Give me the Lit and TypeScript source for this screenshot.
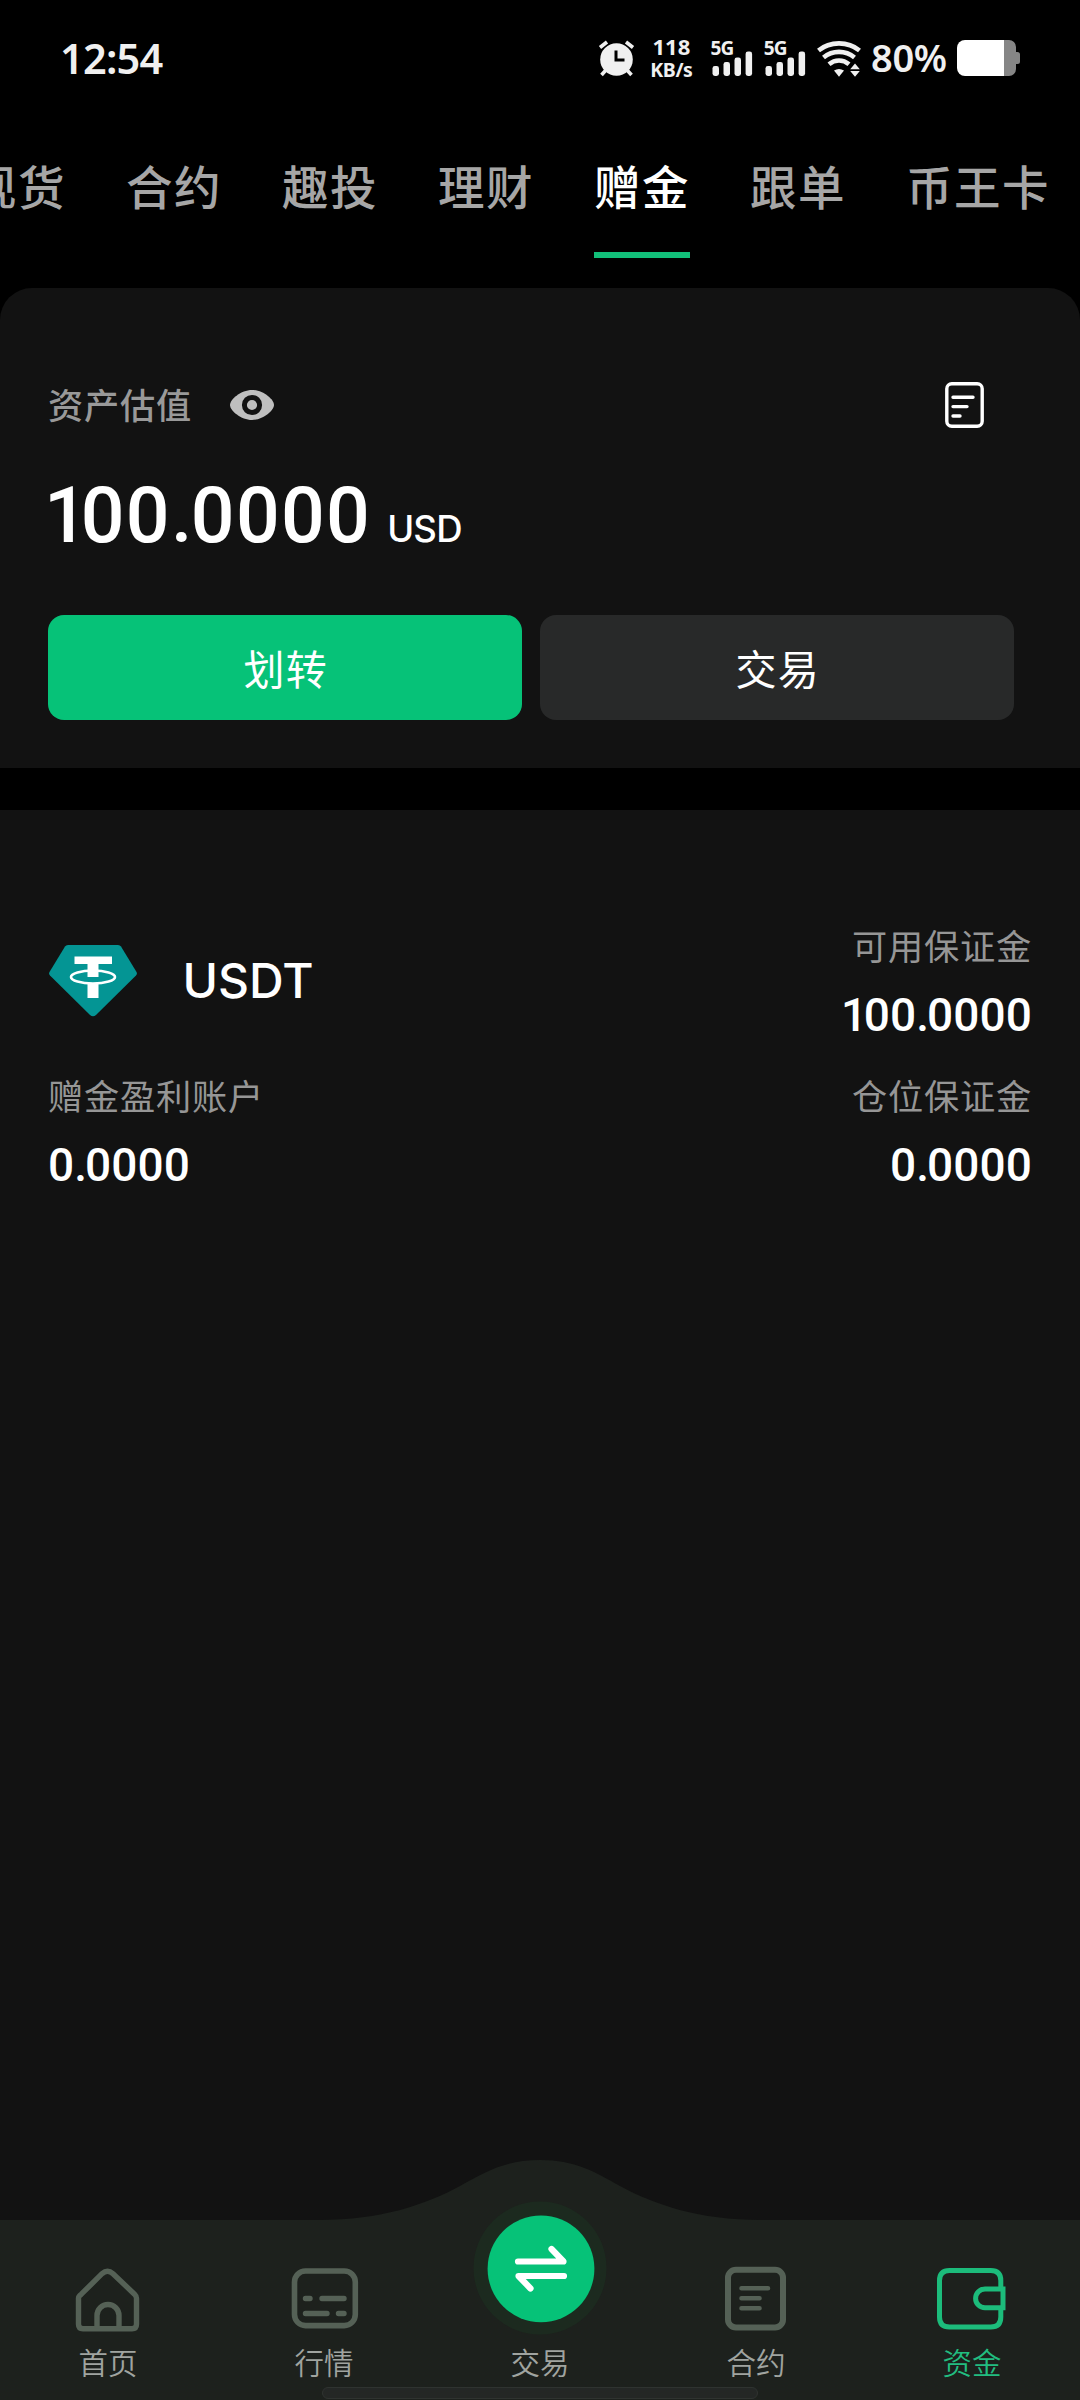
import { LitElement, html, css, svg } from "lit";
import { customElement, property } from "lit/decorators.js";
import { classMap } from "lit/directives/class-map.js";

const CJK = css`"Noto Sans CJK SC", "Noto Sans", sans-serif`;
const LATIN = css`Inter, "Noto Sans CJK SC", sans-serif`;
const DIGITS = css`Roboto, Inter, sans-serif`;

/** Tightens the leading one and the decimal point, as proportional figures do. */
const figures = (value: string) =>
  [...value].map((c) =>
    c === "1" ? html`<span class="one">1</span>` : c === "." ? html`<span class="dot">.</span>` : c
  );

@customElement("status-bar")
class StatusBar extends LitElement {
  static styles = css`
    :host { display: block; }
    .bar {
      height: 116px;
      box-sizing: border-box;
      padding: 0 60px 0 60px;
      display: flex;
      align-items: center;
      color: #f0f0f0;
      font-family: "Noto Sans", sans-serif;
    }
    .time { font-size: 41.5px; font-weight: 600; letter-spacing: -0.8px; line-height: 60px; flex: 1; margin-top: -1px; }
    .alarm { display: block; margin-right: 14.5px; }
    .speed {
      width: 44px;
      margin-right: 18.5px;
      display: flex;
      flex-direction: column;
      align-items: center;
      font-weight: 700;
      font-size: 22px;
      line-height: 23px;
    }
    .unit { font-size: 19.5px; letter-spacing: -0.4px; }
    .signal { width: 43px; height: 36px; margin-right: 10.3px; display: flex; position: relative; }
    .gen { position: absolute; left: -1.5px; top: -3px; font-size: 19px; line-height: 22px; font-weight: 700; letter-spacing: -0.8px; }
    .bars { display: block; }
    .wifi { display: block; margin-left: -1.5px; margin-right: 10px; }
    .pct { font-size: 38px; line-height: 60px; font-weight: 600; letter-spacing: -0.3px; width: 77px; margin-right: 9px; margin-top: -2px; white-space: nowrap; }
    .battery { display: block; }
  `;

  private signal() {
    return html`<div class="signal">
      <span class="gen">5G</span>
      <svg class="bars" width="43" height="36" viewBox="0 0 43 36" fill="#f0f0f0">
        <rect x="0.5" y="26" width="6.5" height="10" rx="2.4" />
        <rect x="11.5" y="22" width="6.5" height="14" rx="2.4" />
        <rect x="22.5" y="17.500" width="6.5" height="18.5" rx="2.4" />
        <rect x="33.6" y="11.500" width="6.5" height="24.5" rx="2.4" />
      </svg>
    </div>`;
  }

  render() {
    return html`<div class="bar">
      <span class="time">12:54</span>
      <svg class="alarm" width="37" height="37" viewBox="0 0 37 37">
        <path d="M2 7.5 9 2M35 7.5 28 2" stroke="#f0f0f0" stroke-width="3.6" fill="none" />
        <path d="M8 30l-4.500 5M29 30l4.500 5" stroke="#f0f0f0" stroke-width="3.6" />
        <circle cx="18.500" cy="19.500" r="16.300" fill="#f0f0f0" />
        <path d="M18 10.500V20H26.500" stroke="#000" stroke-width="3" fill="none" />
      </svg>
      <div class="speed"><span>118</span><span class="unit">KB/s</span></div>
      ${this.signal()}${this.signal()}
      <svg class="wifi" width="44" height="37" viewBox="0 0 44 37">
        <g fill="none" stroke="#f0f0f0" stroke-width="4.600">
          <path d="M1.500 10.500C13 1 31 1 42.500 10.500" />
          <path d="M6.500 17.500C15.500 10 28.500 10 37.500 17.500" />
          <path d="M12 24.200C18 19.200 26 19.200 32 24.200" />
        </g>
        <path d="M17 30.500Q22 27.500 27 30.500L22 36.800Z" fill="#f0f0f0" />
        <path d="M38 23.500 42.800 29.200H33.200ZM38 36.800 33.200 31H42.800Z" fill="#f0f0f0" />
      </svg>
      <span class="pct">80%</span>
      <svg class="battery" width="63" height="36" viewBox="0 0 63 36">
        <path d="M47 0h5a7 7 0 0 1 7 7v5h1.500a2.500 2.500 0 0 1 2.500 2.500v7a2.500 2.500 0 0 1-2.500 2.500H59v5a7 7 0 0 1-7 7h-5z" fill="#868686" />
        <path d="M8 0H47V36H8a8 8 0 0 1-8-8V8a8 8 0 0 1 8-8z" fill="#fff" />
      </svg>
    </div>`;
  }
}

@customElement("account-tabs")
class AccountTabs extends LitElement {
  @property({ type: Array }) items: string[] = [];
  @property() active = "";

  static styles = css`
    :host { display: block; overflow: hidden; }
    .tabs { display: flex; gap: 60px; margin-left: -30px; height: 142px; }
    .tab {
      flex: none;
      box-sizing: border-box;
      height: 142px;
      padding-top: 34px;
      border-bottom: 6px solid transparent;
      font: 500 46.5px/70px ${CJK};
      letter-spacing: 1.5px;
      color: #a6a6a6;
      white-space: nowrap;
    }
    .on { color: #fff; border-bottom-color: #12bf79; }
  `;

  render() {
    return html`<nav class="tabs">
      ${this.items.map(
        (t) => html`<span class=${classMap({ tab: true, on: t === this.active })}>${t}</span>`
      )}
    </nav>`;
  }
}

@customElement("balance-panel")
class BalancePanel extends LitElement {
  static styles = css`
    :host { display: block; }
    .panel {
      box-sizing: border-box;
      height: 480px;
      background: #121212;
      border-radius: 32px 32px 0 0;
      padding: 90px 66px 48px 48px;
      display: flex;
      flex-direction: column;
    }
    .head { display: flex; align-items: center; height: 54px; }
    .label { font: 500 35.2px/54px ${CJK}; letter-spacing: 0.8px; color: #999; margin-top: -3px; }
    .eye { display: block; margin-left: 38px; }
    .doc { display: block; margin-left: auto; margin-right: 30px; }
    .amount { display: flex; align-items: baseline; margin-top: 34px; height: 100px; color: #fff; white-space: nowrap; }
    .num { font: 500 77px/100px ${DIGITS}; letter-spacing: 1.3px; margin-left: -4px; }
    .one { letter-spacing: -7px; }
    .dot { letter-spacing: -1.5px; }
    .cur { font: 450 36.500px/100px ${LATIN}; letter-spacing: -0.8px; margin-left: 16px; }
    .actions { display: flex; gap: 18px; margin-top: auto; }
    .btn {
      flex: 1;
      height: 105px;
      border-radius: 16px;
      background: #282929;
      color: #fff;
      text-align: center;
      font: 400 41px/104px ${CJK};
      letter-spacing: 1.2px;
      text-indent: 1.6px;
    }
    .primary { background: #06c278; }
  `;

  render() {
    return html`<section class="panel">
      <div class="head">
        <span class="label">资产估值</span>
        <svg class="eye" width="44" height="30" viewBox="0 0 44 30">
          <path d="M22 0C33 0 44 9.500 44 15S33 30 22 30 0 20.500 0 15 11 0 22 0Z" fill="#bfbfbf" />
          <circle cx="22" cy="15" r="7.600" fill="#bfbfbf" stroke="#121212" stroke-width="5" />
        </svg>
        <svg class="doc" width="39" height="46" viewBox="0 0 39 46" fill="none" stroke="#fff">
          <rect x="1.800" y="1.800" width="35.400" height="42.400" rx="5" stroke-width="3.400" />
          <path d="M8 15.200H28M8 24.600H22M8 34H15" stroke-width="3.400" stroke-linecap="round" />
        </svg>
      </div>
      <div class="amount"><span class="num">${figures("100.0000")}</span><span class="cur">USD</span></div>
      <div class="actions">
        <div class="btn primary">划转</div>
        <div class="btn">交易</div>
      </div>
    </section>`;
  }
}

@customElement("asset-card")
class AssetCard extends LitElement {
  static styles = css`
    :host { display: block; }
    .card {
      display: grid;
      grid-template-columns: 1fr auto;
      padding: 108px 48px 0;
    }
    .coin { display: flex; align-items: center; height: 150px; }
    .gem { display: block; margin: -25px 0 0 0; }
    .name { font: 500 48px/60px ${LATIN}; letter-spacing: 0; color: #fff; margin: -25px 0 0 44.5px; }
    .cell { display: flex; flex-direction: column; height: 150px; }
    .end { align-items: flex-end; }
    .label { font: 400 35.2px/54px ${CJK}; letter-spacing: 0.8px; color: #969696; }
    .value { font: 500 46px/60px ${DIGITS}; letter-spacing: 0.1px; color: #fff; margin-top: 13px; }
    .one { letter-spacing: -3.5px; }
    .dot { letter-spacing: -2px; }
  `;

  private cell(label: string, value: string, end = true) {
    return html`<div class=${classMap({ cell: true, end })}>
      <span class="label">${label}</span><span class="value">${figures(value)}</span>
    </div>`;
  }

  render() {
    return html`<section class="card">
      <div class="coin">
        <svg class="gem" width="90" height="73" viewBox="0 0 90 73">
          <path d="M20 1H70Q72 1 73 2.500L88.500 28Q89.500 30 88 31.500L48 71Q45 73.500 42 71L2 31.500Q.5 30 1.500 28L17 2.500Q18 1 20 1Z" fill="#049594" />
          <path d="M26.500 12.500H64V20H50.500V33H39.500V20H26.500ZM39.500 39H50.500V54H39.500Z" fill="#fff" />
          <ellipse cx="45" cy="33" rx="22" ry="6.500" fill="none" stroke="#fff" stroke-width="2.600" />
        </svg>
        <span class="name">USDT</span>
      </div>
      ${this.cell("可用保证金", "100.0000")}
      ${this.cell("赠金盈利账户", "0.0000", false)}
      ${this.cell("仓位保证金", "0.0000")}
    </section>`;
  }
}

const DIM = "#556156";

const navIcons = {
  home: svg`<g fill="none" stroke=${DIM} stroke-width="5.400">
    <path d="M6.800 27 27.500 6.500Q33 1.500 38.500 6.500L60 27Q62 29 62 31V57Q62 61.500 57.500 61.500H8.500Q4 61.500 4 57V31Q4 29 6.800 27Z" transform="translate(1.500 1.200)" />
    <path d="M24 62.500V49.500A11 11 0 0 1 46 49.500V62.500" />
  </g>`,
  market: svg`<g fill="none" stroke=${DIM}>
    <rect x="5.500" y="5" width="60.800" height="54.600" rx="11" stroke-width="5.600" />
    <path d="M16.500 32.500H21M33 32.500H55M16.500 47.500H38M49.500 47.500H55" stroke-width="5.400" stroke-linecap="round" />
  </g>`,
  contract: svg`<g fill="none" stroke=${DIM}>
    <rect x="7" y="3.800" width="55" height="57.600" rx="8" stroke-width="6" />
    <path d="M20.500 22.300H47M20.500 32.300H38.500M20.500 42.300H38.500" stroke-width="4.600" stroke-linecap="round" />
  </g>`,
  wallet: svg`<g fill="none" stroke="#1cbc7b" stroke-width="5">
    <path d="M63.800 23.500V14.500Q63.800 4.500 53.800 4.500H12.500Q2.500 4.500 2.500 14.500V51Q2.500 61 12.500 61H53.800Q63.800 61 63.800 51V41" />
    <path d="M66 23H48A9.400 9.400 0 0 0 48 41.800H66Z" />
  </g>`,
};

@customElement("bottom-nav")
class BottomNav extends LitElement {
  static styles = css`
    :host { display: block; }
    .nav { position: relative; height: 240px; display: grid; grid-template-columns: repeat(5, 1fr); padding-top: 106px; box-sizing: border-box; }
    .shape { position: absolute; left: 0; top: 0; display: block; }
    .item { position: relative; display: flex; flex-direction: column; align-items: center; }
    .icon { display: block; height: 70px; }
    .label { font: 350 29.5px/44px ${CJK}; color: #a0a4a0; margin-top: 3px; }
    .on { color: #22bd80; }
    .swap { display: block; margin: -65px 0 1px; }
    .pill {
      position: absolute;
      left: 322px;
      bottom: 1px;
      width: 436px;
      height: 12px;
      box-sizing: border-box;
      border-radius: 6px;
      background: #242725;
      border: 1.5px solid #2f3330;
    }
  `;

  private item(label: string, icon: unknown, on = false) {
    return html`<div class="item">
      <svg class="icon" width="70" height="70" viewBox="0 0 70 70">${icon}</svg>
      <span class=${classMap({ label: true, on })}>${label}</span>
    </div>`;
  }

  render() {
    return html`<nav class="nav">
      <svg class="shape" width="1080" height="240" viewBox="0 0 1080 240">
        <path d="M0 60H320C380 60 425 45 460 26C485 12 505 0 540 0S595 12 620 26C655 45 700 60 760 60H1080V240H0Z" fill="#1d211d" />
      </svg>
      ${this.item("首页", navIcons.home)}
      ${this.item("行情", navIcons.market)}
      <div class="item">
        <svg class="swap" width="134" height="134" viewBox="0 0 134 134">
          <circle cx="67" cy="67" r="66.500" fill="#1c2a1f" />
          <circle cx="68" cy="67.800" r="53.400" fill="#06c278" />
          <path d="M45 60.500H90.500L78.500 48M91 75H45.500L57.500 87.500" fill="none" stroke="#fff" stroke-width="6.200" stroke-linecap="round" stroke-linejoin="round" />
        </svg>
        <span class="label">交易</span>
      </div>
      ${this.item("合约", navIcons.contract)}
      ${this.item("资金", navIcons.wallet, true)}
      <div class="pill"></div>
    </nav>`;
  }
}

@customElement("app-root")
class AppRoot extends LitElement {
  static styles = css`
    :host { display: block; }
    .page {
      width: 1080px;
      height: 2400px;
      background: #000;
      display: flex;
      flex-direction: column;
      overflow: hidden;
    }
    .tabs { margin-bottom: 30px; }
    .body {
      flex: 1;
      margin-top: 42px;
      background: #121212;
      display: flex;
      flex-direction: column;
      justify-content: space-between;
    }
  `;

  render() {
    return html`<div class="page">
      <status-bar></status-bar>
      <account-tabs
        class="tabs"
        .items=${["现货", "合约", "趣投", "理财", "赠金", "跟单", "币王卡"]}
        active="赠金"
      ></account-tabs>
      <balance-panel></balance-panel>
      <main class="body">
        <asset-card></asset-card>
        <bottom-nav></bottom-nav>
      </main>
    </div>`;
  }
}
